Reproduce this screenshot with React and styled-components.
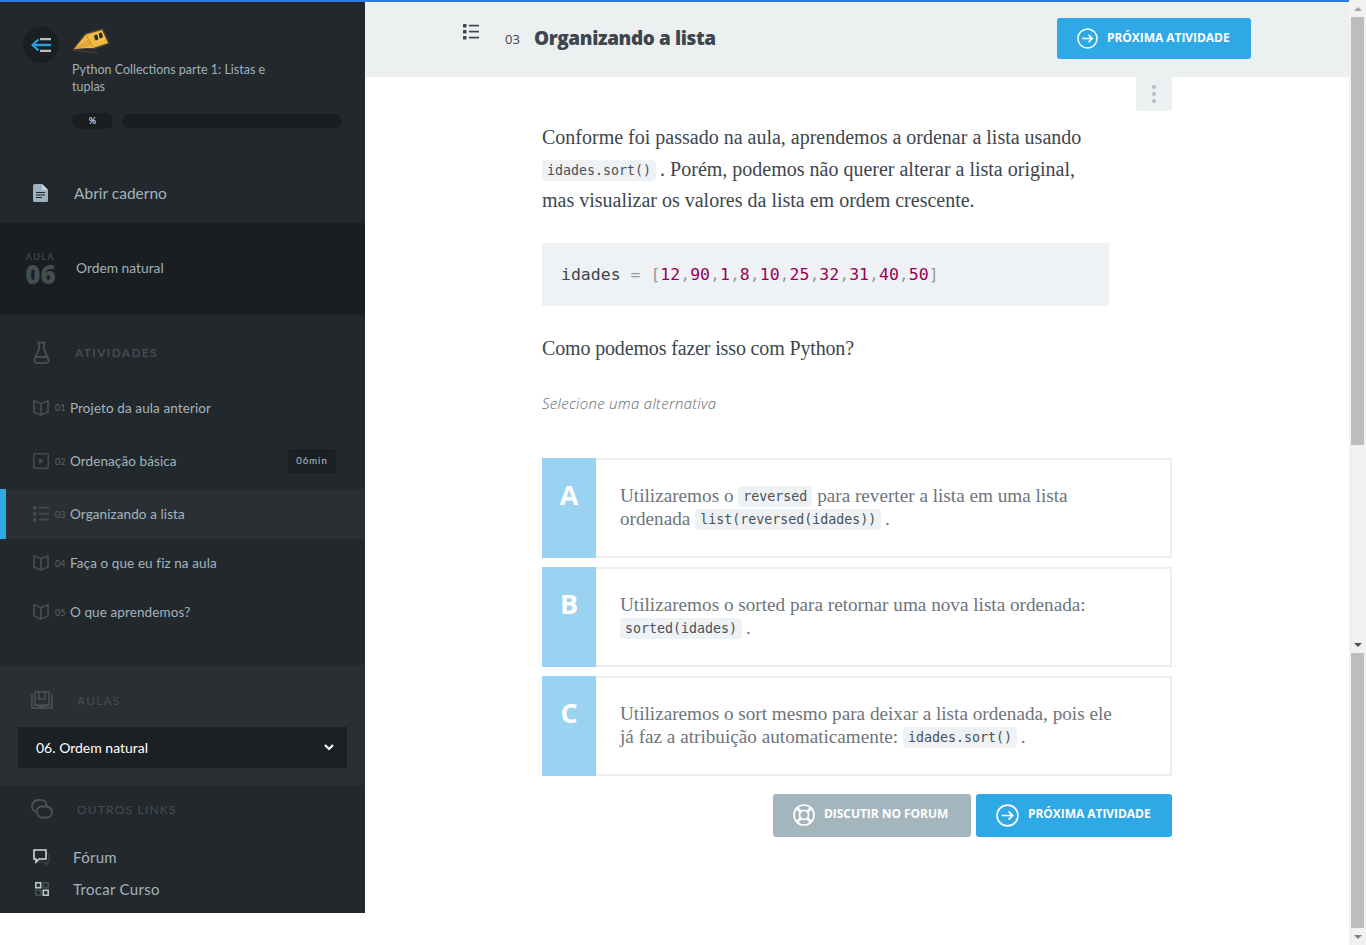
import React from "react";
import styled, { createGlobalStyle } from "styled-components";

const Global = createGlobalStyle`
  html, body { margin: 0; padding: 0; background: #fff; overflow: hidden; }
  * { box-sizing: border-box; }
`;

const SANS = `"Open Sans", "Liberation Sans", sans-serif`;
const SIDE = `Lato, "Open Sans", sans-serif`;
const SERIF = `"Liberation Serif", serif`;
const MONO = `"DejaVu Sans Mono", monospace`;

const Page = styled.div`
  display: flex;
  width: 1366px;
  height: 945px;
  overflow: hidden;
`;

const Left = styled.div`
  flex: 1;
  display: flex;
  flex-direction: column;
  border-top: 2px solid #2f7be0;
  min-width: 0;
`;

const Columns = styled.div`
  display: flex;
  flex: 1;
  min-height: 0;
`;

/* sidebar */
const Sidebar = styled.aside`
  width: 365px;
  height: 911px;
  flex-shrink: 0;
  background: #23282c;
  font-family: ${SIDE};
  color: #a2b4bd;
`;

const CourseHead = styled.div`
  height: 221px;
  padding: 25px 23px 0;
  display: flex;
  flex-direction: column;
`;

const CourseTop = styled.div`
  display: flex;
  gap: 13px;
`;

const BackCircle = styled.div`
  width: 36px;
  height: 36px;
  border-radius: 50%;
  background: #1b1f22;
  display: flex;
  align-items: center;
  justify-content: center;
  flex-shrink: 0;
`;

const CourseInfo = styled.div`
  width: 270px;
`;

const CourseTitle = styled.div`
  margin-top: 8px;
  font-size: 12.500px;
  line-height: 17px;
  width: 205px;
  color: #9fb1ba;
`;

const ProgressRow = styled.div`
  display: flex;
  gap: 9px;
  align-items: center;
  margin-top: 18px;
`;

const Percent = styled.div`
  width: 41px;
  height: 16px;
  border-radius: 8px;
  background: #1a1e21;
  color: #c8d2d6;
  font-size: 9px;
  font-weight: 700;
  line-height: 16px;
  text-align: center;
`;

const Track = styled.div`
  width: 220px;
  height: 14px;
  border-radius: 7px;
  background: #1a1e21;
`;

const Notebook = styled.div`
  display: flex;
  align-items: center;
  gap: 26px;
  margin: 55px 0 0 10px;
  font-size: 15.500px;
  color: #a2b4bd;
`;

const Lesson = styled.div`
  height: 92px;
  background: #1a1e21;
  display: flex;
  align-items: center;
  padding-left: 25px;
  gap: 20px;
`;

const LessonNum = styled.div`
  width: 31px;
  text-align: center;
  small {
    display: block;
    font-size: 9px;
    letter-spacing: 1.500px;
    line-height: 10px;
    color: #4b5459;
  }
  strong {
    display: block;
    font-family: ${SANS};
    font-size: 26px;
    font-weight: 800;
    line-height: 24px;
    color: #434d52;
  }
`;

const LessonName = styled.div`
  font-size: 13.800px;
  margin-top: -3px;
  color: #9fb1ba;
`;

const SectionHead = styled.div`
  display: flex;
  align-items: center;
  height: ${(p) => p.$h}px;
  padding-top: ${(p) => p.$top || 0}px;
  padding-left: ${(p) => p.$left || 33}px;
  gap: ${(p) => p.$gap || 25}px;
`;

const SectionLabel = styled.div`
  font-size: 12px;
  font-weight: ${(p) => p.$weight || 400};
  letter-spacing: ${(p) => p.$spacing || 1.200}px;
  color: #454d53;
`;

const Activity = styled.div`
  display: flex;
  align-items: center;
  height: ${(p) => p.$h}px;
  background: ${(p) => (p.$active ? "#2a2f33" : "transparent")};
  border-left: ${(p) => (p.$active ? "6px solid #2fa9e6" : "none")};
  padding-left: ${(p) => (p.$active ? 27 : 33)}px;
`;

const ActivityNum = styled.span`
  width: 15px;
  margin-left: 6px;
  font-size: 9px;
  color: #596268;
`;

const ActivityName = styled.span`
  font-size: 13.500px;
  letter-spacing: 0.100px;
  color: #a2b4bd;
  flex: 1;
`;

const Duration = styled.span`
  width: 48px;
  height: 24px;
  margin-right: 29px;
  background: #1c2023;
  border-radius: 2px;
  font-size: 9.500px;
  letter-spacing: 1px;
  line-height: 24px;
  text-align: center;
  color: #b4c0c6;
`;

const ActivityList = styled.div`
  height: 283px;
`;

const LessonsBox = styled.div`
  height: 120px;
  background: #2a2f33;
  padding: 0 18px;
`;

const Select = styled.div`
  height: 41px;
  background: #1c2023;
  display: flex;
  align-items: center;
  justify-content: space-between;
  padding: 0 13px 0 18px;
  color: #fff;
  font-size: 14px;
`;

const Links = styled.div`
  margin-top: 8px;
`;

const LinkRow = styled.div`
  display: flex;
  align-items: center;
  gap: 23px;
  height: 32px;
  padding-left: 33px;
  font-size: 15px;
  letter-spacing: 0.300px;
  color: #a2b4bd;
`;

const LinkIcon = styled.span`
  width: 17px;
  display: flex;
  justify-content: center;
`;

/* main column */
const Main = styled.main`
  flex: 1;
  min-width: 0;
  display: flex;
  flex-direction: column;
`;

const TopBar = styled.header`
  height: 75px;
  background: #edf0f1;
  display: flex;
  align-items: center;
  padding: 0 98px 2px;
  flex-shrink: 0;
`;

const TopIcon = styled.div`
  align-self: flex-start;
  margin-top: 22px;
  width: 42px;
`;

const TopNum = styled.span`
  font-family: ${SANS};
  font-size: 13px;
  color: #3d464d;
  width: 29px;
  margin-top: 1px;
`;

const TopTitle = styled.h1`
  margin: -2px 0 0;
  font-family: ${SANS};
  font-size: 19px;
  font-weight: 800;
  letter-spacing: -0.400px;
  color: #3d464d;
  flex: 1;
`;

const Button = styled.div`
  display: flex;
  align-items: center;
  height: ${(p) => p.$h}px;
  width: ${(p) => p.$w}px;
  padding-left: 20px;
  gap: ${(p) => p.$gap || 9}px;
  background: ${(p) => p.$bg || "#2fa9e6"};
  border-radius: 3px;
  color: #fff;
  font-family: ${SANS};
  font-size: 12px;
  font-weight: 700;
  white-space: nowrap;
`;

const ButtonLabel = styled.span`
  margin-bottom: ${(p) => p.$raise || 2}px;
  letter-spacing: -0.050px;
`;

const Content = styled.div`
  width: 630px;
  margin-left: 177px;
  position: relative;
`;

const Kebab = styled.div`
  position: absolute;
  top: 0;
  right: 0;
  width: 36px;
  height: 34px;
  background: #edf0f1;
  border-radius: 0 0 3px 3px;
  display: flex;
  flex-direction: column;
  align-items: center;
  justify-content: center;
  gap: 3px;
  i {
    width: 4px;
    height: 4px;
    border-radius: 50%;
    background: #aebfc9;
  }
`;

const Para = styled.p`
  margin: 0;
  padding-top: 45px;
  width: 545px;
  font-family: ${SERIF};
  font-size: 20px;
  line-height: 31.500px;
  color: #3d464d;
`;

const Code = styled.code`
  font-family: ${MONO};
  font-size: 13.300px;
  line-height: 1;
  vertical-align: 1px;
  background: #eff2f5;
  border-radius: 4px;
  padding: 3px 5px;
  color: #495057;
`;

const CodeBlock = styled.pre`
  margin: 26px 0 0;
  width: 567px;
  height: 63px;
  background: #eff2f5;
  padding: 0 19px;
  display: flex;
  align-items: center;
  font-family: ${MONO};
  font-size: 16.500px;
  color: #3d464d;
  em { font-style: normal; color: #99a; }
  b { font-weight: 400; color: #905; }
  u { text-decoration: none; color: #999; }
`;

const Question = styled.p`
  margin: 27px 0 0;
  font-family: ${SERIF};
  font-size: 20px;
  letter-spacing: -0.150px;
  line-height: 31px;
  color: #3d464d;
`;

const Hint = styled.p`
  margin: 29px 0 0;
  font-family: ${SANS};
  font-style: italic;
  font-weight: 300;
  font-size: 15px;
  letter-spacing: 0.300px;
  line-height: 20px;
  color: #5e686e;
`;

const Options = styled.div`
  margin-top: 45px;
  display: flex;
  flex-direction: column;
  gap: 9px;
`;

const Option = styled.div`
  display: flex;
  height: 100px;
  border: 2px solid #eceff1;
  border-left: 0;
`;

const Letter = styled.div`
  width: 54px;
  margin: -2px 0;
  background: #9ad3f2;
  color: #fff;
  font-family: ${SANS};
  font-size: 27px;
  font-weight: 700;
  line-height: 32px;
  padding-top: 21px;
  text-align: center;
`;

const OptionText = styled.div`
  flex: 1;
  padding: 24px 55px 0 24px;
  font-family: ${SERIF};
  font-size: 19.200px;
  line-height: 23px;
  color: #6d747b;
`;

const Actions = styled.div`
  display: flex;
  justify-content: flex-end;
  gap: 5px;
  margin-top: 18px;
`;

/* scrollbar, drawn because the reference has it */
const Scrollbar = styled.div`
  width: 17px;
  height: 945px;
  flex-shrink: 0;
  background: #f1f1f1;
  display: flex;
  flex-direction: column;
  align-items: center;
`;

const Arrow = styled.div`
  height: 17px;
  flex-shrink: 0;
  display: flex;
  align-items: center;
  justify-content: center;
  &::before {
    content: "";
    border-left: 4px solid transparent;
    border-right: 4px solid transparent;
    ${(p) => (p.$down ? "border-top" : "border-bottom")}: 4px solid ${(p) => p.$color || "#a3a3a3"};
  }
`;

const Thumb = styled.div`
  width: 13px;
  height: ${(p) => p.$h}px;
  flex-shrink: 0;
  background: #bdbdbd;
`;

const Spacer = styled.div`
  flex-shrink: 0;
  height: ${(p) => p.$h}px;
`;

const LogoBox = styled.svg`
  display: block;
  margin-top: 1px;
`;

/* icons */
const BackIcon = () => (
  <svg width="20" height="14" viewBox="0 0 20 14" fill="none">
    <path d="M7.500 1.500 1.500 7l6 5.500" stroke="#2d9fdc" strokeWidth="2.200" />
    <path d="M2 7h18" stroke="#2d9fdc" strokeWidth="2.400" />
    <path d="M9 1.200h11M9 12.800h11" stroke="#b9c0c4" strokeWidth="2.200" />
  </svg>
);

const Logo = () => (
  <LogoBox width="38" height="25" viewBox="0 0 38 25">
    <path d="M0 22 13 5 31 0l7 16-14 5z" fill="#45433d" />
    <path d="M2 21 14 6.500 30 2l6 13-15 5-7 0z" fill="#f5b83f" />
    <path d="M4 20 17 12M7 20 19 13.500M11 20 20 15M14 7 21 19" stroke="#bf8d2b" strokeWidth="0.800" fill="none" />
    <path d="M21.500 7 29 4l3.500 8-7 3z" fill="#f7c453" />
    <path d="M22 8c1.500-1.500 3-2 3.500-.5l1 3.500c-1.500 1.500-3 2-3.500.5zM26.500 6c1.500-1.500 3-2 3.500-.5l1 3.500c-1.500 1.500-3 2-3.500.5z" fill="#2f2d29" />
    <path d="M1 22.500 25 24.500" stroke="#45433d" strokeWidth="1" />
  </LogoBox>
);

const DocIcon = () => (
  <svg width="15" height="18" viewBox="0 0 15 18">
    <path d="M2 0h7l6 6v10.500A1.500 1.500 0 0 1 13.500 18h-12A1.500 1.500 0 0 1 0 16.500V2a2 2 0 0 1 2-2z" fill="#9cb2c0" />
    <path d="M9 0l6 6H9z" fill="#c6d3da" />
    <path d="M3 8.500h9M3 11h9M3 13.500h6" stroke="#23282c" strokeWidth="1" />
  </svg>
);

const FlaskIcon = () => (
  <svg width="17" height="23" viewBox="0 0 17 23" fill="none" stroke="#454d53" strokeWidth="2">
    <path d="M4 1.500h9M6 2v6L1.500 18.500C1 20.500 2 22 4 22h9c2 0 3-1.500 2.500-3.500L11 8V2" />
    <path d="M3.500 16h10" />
  </svg>
);

const BookIcon = () => (
  <svg width="16" height="16" viewBox="0 0 16 16" fill="none" stroke="#434c53" strokeWidth="1.800">
    <path d="M8 3.500 1 1v11l7 3 7-3V1zM8 3.500V15" />
  </svg>
);

const PlayIcon = () => (
  <svg width="16" height="16" viewBox="0 0 16 16">
    <rect x="0.750" y="0.750" width="14.500" height="14.500" rx="1" fill="none" stroke="#434c53" strokeWidth="1.500" />
    <path d="M6 5l5 3-5 3z" fill="#434c53" />
  </svg>
);

const ListIcon = ({ color = "#434c53" }) => (
  <svg width="16" height="16" viewBox="0 0 16 16" fill={color}>
    <rect x="0" y="0" width="3.500" height="3.500" rx="0.500" />
    <rect x="0" y="6" width="3.500" height="3.500" rx="0.500" />
    <rect x="0" y="12" width="3.500" height="3.500" rx="0.500" />
    <rect x="6" y="0.750" width="10" height="1.700" />
    <rect x="6" y="6.750" width="10" height="1.700" />
    <rect x="6" y="12.750" width="10" height="1.700" />
  </svg>
);

const LessonsIcon = () => (
  <svg width="22" height="18" viewBox="0 0 22 18" fill="none" stroke="#4b5358" strokeWidth="1.500">
    <path d="M1 3v14h20V3" />
    <path d="M4 14V1h14v13zM4 14l7 2 7-2" />
    <path d="M8 1v7h6V1" />
  </svg>
);

const LinksIcon = () => (
  <svg width="22" height="20" viewBox="0 0 22 20" fill="none" stroke="#4b5358" strokeWidth="1.800">
    <path d="M6.500 13C3.500 13 1 10.500 1 7.500S3.500 1 7 1h3c3 0 5.500 2 5.500 5v1.500H11c-3 0-5 2-5 5s2 6 5 6h5c3 0 5-2.500 5-5.500s-2-5-5-5" />
  </svg>
);

const ForumIcon = () => (
  <svg width="17" height="16" viewBox="0 0 17 16">
    <path d="M5 5h11v8h-2v3l-3-3H5z" fill="none" stroke="#3d464c" strokeWidth="1.200" />
    <path d="M1 1h12v9H6l-3 3v-3H1z" fill="#23282c" stroke="#cdd6da" strokeWidth="1.600" />
  </svg>
);

const SwapIcon = () => (
  <svg width="14" height="14" viewBox="0 0 14 14" fill="none" strokeWidth="1.600">
    <rect x="0.800" y="0.800" width="4.900" height="4.900" stroke="#b9c6cc" />
    <rect x="8.300" y="8.300" width="4.900" height="4.900" stroke="#b9c6cc" />
    <rect x="8.300" y="0.800" width="4.900" height="4.900" stroke="#464e53" />
    <rect x="0.800" y="8.300" width="4.900" height="4.900" stroke="#464e53" />
  </svg>
);

const Chevron = () => (
  <svg width="10" height="7" viewBox="0 0 10 7" fill="none" stroke="#fff" strokeWidth="2.200">
    <path d="M1 1l4 4 4-4" />
  </svg>
);

const NextIcon = ({ size = 21 }) => (
  <svg width={size} height={size} viewBox="0 0 22 22" fill="none" stroke="#fff" strokeWidth="1.600">
    <circle cx="11" cy="11" r="10" />
    <path d="M5.500 11h10.500M12 7l4 4-4 4" />
  </svg>
);

const HelpIcon = () => (
  <svg width="22" height="22" viewBox="0 0 22 22" fill="none" stroke="#fff" strokeWidth="1.700">
    <circle cx="11" cy="11" r="10" />
    <circle cx="11" cy="11" r="4.500" />
    <path d="M4 4l4 4M18 4l-4 4M4 18l4-4M18 18l-4-4" strokeWidth="3" />
  </svg>
);

const activities = [
  { num: "01", name: "Projeto da aula anterior", icon: <BookIcon />, h: 51 },
  { num: "02", name: "Ordenação básica", icon: <PlayIcon />, h: 56, time: "06min" },
  { num: "03", name: "Organizando a lista", icon: <ListIcon />, h: 50, active: true },
  { num: "04", name: "Faça o que eu fiz na aula", icon: <BookIcon />, h: 48 },
  { num: "05", name: "O que aprendemos?", icon: <BookIcon />, h: 50 },
];

const numbers = ["12", "90", "1", "8", "10", "25", "32", "31", "40", "50"];

export default function App() {
  return (
    <Page>
      <Global />
      <Left>
        <Columns>
          <Sidebar>
            <CourseHead>
              <CourseTop>
                <BackCircle>
                  <BackIcon />
                </BackCircle>
                <CourseInfo>
                  <Logo />
                  <CourseTitle>Python Collections parte 1: Listas e tuplas</CourseTitle>
                  <ProgressRow>
                    <Percent>%</Percent>
                    <Track />
                  </ProgressRow>
                </CourseInfo>
              </CourseTop>
              <Notebook>
                <DocIcon />
                Abrir caderno
              </Notebook>
            </CourseHead>
            <Lesson>
              <LessonNum>
                <small>AULA</small>
                <strong>06</strong>
              </LessonNum>
              <LessonName>Ordem natural</LessonName>
            </Lesson>
            <SectionHead $h={67} $top={7}>
              <FlaskIcon />
              <SectionLabel $weight={700} $spacing={1.3}>ATIVIDADES</SectionLabel>
            </SectionHead>
            <ActivityList>
              {activities.map((a) => (
                <Activity key={a.num} $h={a.h} $active={a.active}>
                  {a.icon}
                  <ActivityNum>{a.num}</ActivityNum>
                  <ActivityName>{a.name}</ActivityName>
                  {a.time && <Duration>{a.time}</Duration>}
                </Activity>
              ))}
            </ActivityList>
            <LessonsBox>
              <SectionHead $h={62} $top={8} $left={13} $gap={24}>
                <LessonsIcon />
                <SectionLabel>AULAS</SectionLabel>
              </SectionHead>
              <Select>
                06. Ordem natural
                <Chevron />
              </Select>
            </LessonsBox>
            <SectionHead $h={48} $left={31} $gap={24}>
              <LinksIcon />
              <SectionLabel>OUTROS LINKS</SectionLabel>
            </SectionHead>
            <Links>
              <LinkRow>
                <LinkIcon>
                  <ForumIcon />
                </LinkIcon>
                Fórum
              </LinkRow>
              <LinkRow>
                <LinkIcon>
                  <SwapIcon />
                </LinkIcon>
                Trocar Curso
              </LinkRow>
            </Links>
          </Sidebar>
          <Main>
            <TopBar>
              <TopIcon>
                <ListIcon color="#3d464d" />
              </TopIcon>
              <TopNum>03</TopNum>
              <TopTitle>Organizando a lista</TopTitle>
              <Button $w={194} $h={41}>
                <NextIcon />
                <ButtonLabel>PRÓXIMA ATIVIDADE</ButtonLabel>
              </Button>
            </TopBar>
            <Content>
              <Kebab>
                <i />
                <i />
                <i />
              </Kebab>
              <Para>
                Conforme foi passado na aula, aprendemos a ordenar a lista usando{" "}
                <Code>idades.sort()</Code>{"\u2009"}. Porém, podemos não querer alterar a lista original, mas visualizar
                os valores da lista em ordem crescente.
              </Para>
              <CodeBlock>
                idades<em>&nbsp;=&nbsp;</em>
                <u>[</u>
                {numbers.map((n, i) => (
                  <React.Fragment key={i}>
                    {i > 0 && <u>,</u>}
                    <b>{n}</b>
                  </React.Fragment>
                ))}
                <u>]</u>
              </CodeBlock>
              <Question>Como podemos fazer isso com Python?</Question>
              <Hint>Selecione uma alternativa</Hint>
              <Options>
                <Option>
                  <Letter>A</Letter>
                  <OptionText>
                    Utilizaremos o <Code>reversed</Code> para reverter a lista em uma lista ordenada{" "}
                    <Code>list(reversed(idades))</Code>{"\u2009"}.
                  </OptionText>
                </Option>
                <Option>
                  <Letter>B</Letter>
                  <OptionText>
                    Utilizaremos o sorted para retornar uma nova lista ordenada: <Code>sorted(idades)</Code>{"\u2009"}.
                  </OptionText>
                </Option>
                <Option>
                  <Letter>C</Letter>
                  <OptionText>
                    Utilizaremos o sort mesmo para deixar a lista ordenada, pois ele já faz a atribuição
                    automaticamente: <Code>idades.sort()</Code>{"\u2009"}.
                  </OptionText>
                </Option>
              </Options>
              <Actions>
                <Button $w={198} $h={43} $bg="#a3b6be">
                  <HelpIcon />
                  <ButtonLabel $raise={4}>DISCUTIR NO FORUM</ButtonLabel>
                </Button>
                <Button $w={196} $h={43}>
                  <NextIcon size={23} />
                  <ButtonLabel $raise={4}>PRÓXIMA ATIVIDADE</ButtonLabel>
                </Button>
              </Actions>
            </Content>
          </Main>
        </Columns>
      </Left>
      <Scrollbar>
        <Arrow />
        <Thumb $h={428} />
        <Spacer $h={191} />
        <Arrow $down $color="#505050" />
        <Thumb $h={275} />
        <Arrow $down $color="#808080" />
      </Scrollbar>
    </Page>
  );
}
